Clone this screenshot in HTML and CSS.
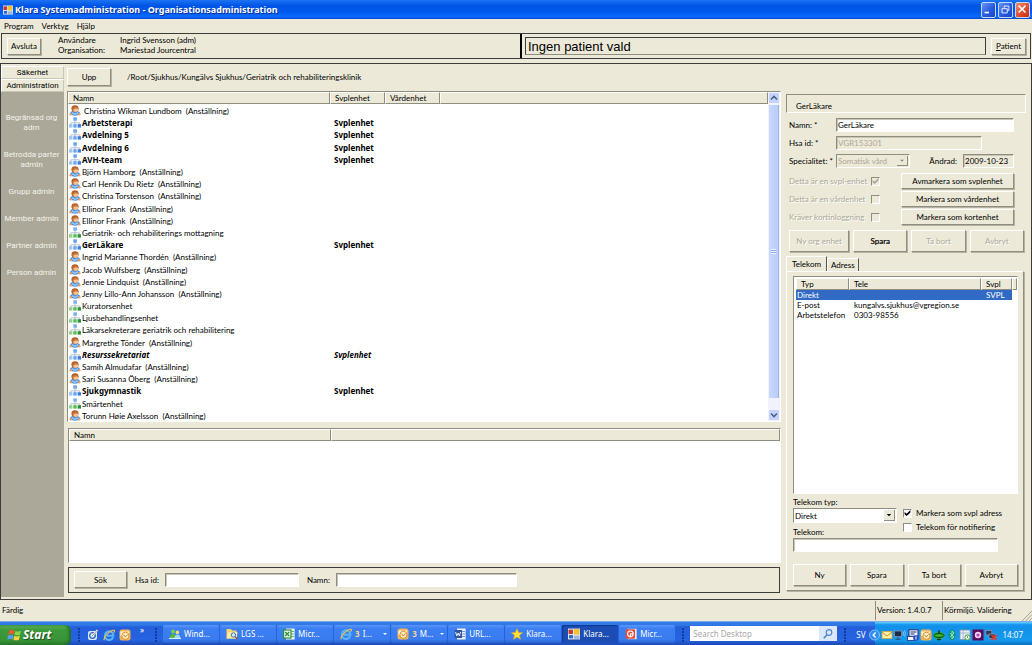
FILE: index.html
```html
<!DOCTYPE html>
<html lang="sv">
<head>
<meta charset="utf-8">
<title>Klara Systemadministration - Organisationsadministration</title>
<link rel="stylesheet" href="styles.css">
</head>
<body>
<svg class="sprite" aria-hidden="true">
  <symbol id="person" viewBox="0 0 12 11">
    <path d="M0.8 9Q1 6.4 3.4 6H8.6Q11 6.400 11.200 9Q9 10.800 6 10.800T0.800 9Z" fill="#4a92e4"/>
    <path d="M3 8.600 6 10 9 8.600V7L6 8.400 3 7Z" fill="#9ccbfa"/>
    <circle cx="1.800" cy="9.200" r="1.300" fill="#e0a070"/><circle cx="10.200" cy="9.200" r="1.300" fill="#e0a070"/>
    <ellipse cx="6" cy="3.600" rx="3.600" ry="3.400" fill="#b5602c"/>
    <ellipse cx="6.700" cy="4.700" rx="2.500" ry="2.200" fill="#f6c294"/>
    <path d="M3 4Q4.500 1 9.200 2.800L8.600 3.800Q6 3 4 5Z" fill="#c9742f"/>
  </symbol>
  <symbol id="org" viewBox="0 0 12 11">
    <path d="M6 3V6M1.8 8V5.8H10.4V8M6 6V8" fill="none" stroke="#a7b4c4" stroke-width="0.8"/>
    <rect x="4.3" y="0.3" width="3.6" height="3.4" fill="#6aa5ee"/>
    <rect x="0" y="7.2" width="3.4" height="3.4" fill="#9cc4f4"/>
    <rect x="4.3" y="7.2" width="3.4" height="3.4" fill="#6aa5ee"/>
    <rect x="8.6" y="7.2" width="3.4" height="3.4" fill="#3f7fd8"/>
  </symbol>
  <symbol id="unit" viewBox="0 0 12 11">
    <path d="M6 3V6M1.8 8V5.8H10.4V8M6 6V8" fill="none" stroke="#a7b4c4" stroke-width="0.8"/>
    <rect x="4.3" y="0.3" width="3.6" height="3.4" fill="#7fb0ee"/>
    <rect x="0" y="7.2" width="3.4" height="3.4" fill="#8fd48c"/>
    <rect x="4.3" y="7.2" width="3.4" height="3.4" fill="#5cbb5a"/>
    <rect x="8.6" y="7.2" width="3.4" height="3.4" fill="#2f8f35"/>
  </symbol>
  <symbol id="form" viewBox="0 0 11 10">
    <rect width="11" height="10" fill="#dfe6f2"/>
    <rect x="0.5" y="1" width="4" height="4" fill="#c8372c"/>
    <rect x="5.5" y="0.5" width="5" height="5" fill="#f2c12e"/>
    <rect x="1" y="6" width="3.5" height="3" fill="#2d62c9"/>
    <rect x="5.5" y="6.5" width="5" height="3" fill="#9fb4d6"/>
  </symbol>
  <symbol id="ie" viewBox="0 0 12 12">
    <path d="M10.2 8.2A4.3 4.3 0 1 1 10.4 5.8V6.7H4" fill="none" stroke="#58b5f7" stroke-width="2"/>
    <path d="M1.4 11.2C-0.6 9 7 1 10.8 1.2 12 1.4 11.4 2.8 10.8 3.6" fill="none" stroke="#f5c63c" stroke-width="1.1"/>
  </symbol>
  <symbol id="outlook" viewBox="0 0 12 12">
    <rect x="0.5" y="0.5" width="11" height="11" rx="2.500" fill="#f3b558"/>
    <path d="M1.500 2.500H10V7H1.500Z" fill="#fff8e6"/>
    <circle cx="6.400" cy="6.800" r="3.600" fill="#fdeec4" stroke="#d98a1e" stroke-width="0.9"/>
    <path d="M4.400 6 6.400 7.800 8.600 5.600" fill="none" stroke="#c06a10"/>
  </symbol>
  <symbol id="desktop" viewBox="0 0 12 12">
    <rect x="1" y="2" width="9" height="9" rx="2" fill="#d8ecfb"/>
    <circle cx="5.5" cy="6.5" r="2.8" fill="none" stroke="#2a6cc0" stroke-width="1.3"/>
    <path d="M5 7 10.5 1" stroke="#fff" stroke-width="1.8"/><path d="M5 7 10 1.6" stroke="#c4552e" stroke-width="0.7"/>
  </symbol>
  <symbol id="people" viewBox="0 0 12 12">
    <circle cx="4" cy="3.6" r="2" fill="#78d046"/><path d="M1 10Q1 6 4 6T7 10Z" fill="#56b82c"/>
    <circle cx="8.4" cy="4.4" r="1.8" fill="#f7dc70"/><path d="M5.6 10.4Q5.6 6.6 8.4 6.6T11.4 10.4Z" fill="#9cd8f8"/>
    <path d="M0 10.4H12" stroke="#e9f6ff"/>
  </symbol>
  <symbol id="folder" viewBox="0 0 12 12">
    <path d="M0.500 1H5L6 2.400H10.500V10.500H0.500Z" fill="#f5d36a"/><path d="M2 4H11.500L10.500 10.600H0.500Z" fill="#ffeaa0"/>
    <circle cx="7.400" cy="7" r="2.200" fill="#cfe8fb" stroke="#3c6cae" stroke-width="0.9"/><path d="M9 8.600 11.4 11" stroke="#80502a" stroke-width="1.2"/>
  </symbol>
  <symbol id="excel" viewBox="0 0 12 12">
    <rect x="3" y="0.500" width="8.600" height="11" fill="#eef8ee"/><path d="M8 3.5H11M8 6H11M8 8.5H11" stroke="#4aa24e" stroke-width="0.8"/>
    <rect x="0.6" y="2" width="7.400" height="8" fill="#eef8ee" stroke="#2f8f3a" stroke-width="1.200"/><path d="M2.2 4 6.200 8M6.200 4 2.2 8" stroke="#2f8f3a" stroke-width="1.4"/>
  </symbol>
  <symbol id="word" viewBox="0 0 12 12">
    <rect x="3" y="0.500" width="8.600" height="11" fill="#eef3fb"/><path d="M8 3.5H11M8 6H11M8 8.5H11" stroke="#5a7ec0" stroke-width="0.8"/>
    <rect x="0.6" y="2" width="7.400" height="8" fill="#2c57a8"/><path d="M1.6 4 2.8 8 4.1 5 5.4 8 6.6 4" fill="none" stroke="#fff" stroke-width="0.9"/>
  </symbol>
  <symbol id="ppt" viewBox="0 0 12 12">
    <rect x="2.6" y="0.8" width="9" height="10.4" fill="#fbe9e2"/>
    <rect x="0.6" y="1.2" width="9.400" height="9.600" rx="1" fill="#e0503c"/><circle cx="5.4" cy="5.8" r="2.8" fill="none" stroke="#fff" stroke-width="1.1"/><path d="M5.4 5.8V9.4M5.4 5.8H8" stroke="#fff"/>
  </symbol>
  <symbol id="star" viewBox="0 0 12 12">
    <path d="M6 0.6 7.6 4.4 11.6 4.7 8.5 7.3 9.5 11.3 6 9.1 2.5 11.3 3.5 7.3 0.4 4.7 4.4 4.4Z" fill="#ffe23d" stroke="#e0a512" stroke-width="0.6"/>
  </symbol>
</svg>

<header class="titlebar">
  <svg class="app-icon"><use href="#form"/></svg>
  <h1>Klara Systemadministration - Organisationsadministration</h1>
  <div class="window-buttons">
    <button class="win" aria-label="Minimera"><svg viewBox="0 0 15 15"><path d="M3 11H8" stroke="#fff" stroke-width="2"/></svg></button>
    <button class="win" aria-label="Återställ"><svg viewBox="0 0 15 15"><path d="M6 5.500V3.500H11.500V8.500H9.500M3.500 6.500H9.500V11.500H3.500Z" fill="none" stroke="#fff"/></svg></button>
    <button class="win close" aria-label="Stäng"><svg viewBox="0 0 15 15"><path d="M3 3 11 11M11 3 3 11" stroke="#fff" stroke-width="1.800"/></svg></button>
  </div>
</header>

<nav class="menubar">
  <button>Program</button><button>Verktyg</button><button>Hjälp</button>
</nav>

<section class="infobar">
  <div class="user-pane">
    <button class="btn">Avsluta</button>
    <dl>
      <dt>Användare</dt><dd>Ingrid Svensson (adm)</dd>
      <dt>Organisation:</dt><dd>Mariestad Jourcentral</dd>
    </dl>
  </div>
  <div class="patient-pane">
    <div class="patient-name">Ingen patient vald</div>
    <button class="btn"><u>P</u>atient</button>
  </div>
</section>

<main class="workspace">
  <aside class="sidebar">
    <button class="side-tab">Säkerhet</button>
    <button class="side-tab">Administration</button>
    <nav class="side-links">
      <a href="#">Begränsad org adm</a>
      <a href="#">Betrodda parter admin</a>
      <a href="#">Grupp admin</a>
      <a href="#">Member admin</a>
      <a href="#">Partner admin</a>
      <a href="#">Person admin</a>
    </nav>
  </aside>

  <section class="browser">
    <div class="pathbar">
      <button class="btn">Upp</button>
      <span>/Root/Sjukhus/Kungälvs Sjukhus/Geriatrik och rehabiliteringsklinik</span>
    </div>
    <div class="list">
      <table class="units">
        <colgroup><col class="c-name"><col class="c-mid"><col class="c-mid"><col></colgroup>
        <thead><tr><th>Namn</th><th>Svplenhet</th><th>Vårdenhet</th><th></th></tr></thead>
        <tbody>
          <tr><td><svg><use href="#person"/></svg>&nbsp;Christina Wikman Lundbom &nbsp;(Anställning)</td><td></td><td></td><td></td></tr>
          <tr class="org"><td><svg><use href="#org"/></svg>Arbetsterapi</td><td>Svplenhet</td><td></td><td></td></tr>
          <tr class="org"><td><svg><use href="#org"/></svg>Avdelning 5</td><td>Svplenhet</td><td></td><td></td></tr>
          <tr class="org"><td><svg><use href="#org"/></svg>Avdelning 6</td><td>Svplenhet</td><td></td><td></td></tr>
          <tr class="org"><td><svg><use href="#org"/></svg>AVH-team</td><td>Svplenhet</td><td></td><td></td></tr>
          <tr><td><svg><use href="#person"/></svg>Björn Hamborg &nbsp;(Anställning)</td><td></td><td></td><td></td></tr>
          <tr><td><svg><use href="#person"/></svg>Carl Henrik Du Rietz &nbsp;(Anställning)</td><td></td><td></td><td></td></tr>
          <tr><td><svg><use href="#person"/></svg>Christina Torstenson &nbsp;(Anställning)</td><td></td><td></td><td></td></tr>
          <tr><td><svg><use href="#person"/></svg>Ellinor Frank &nbsp;(Anställning)</td><td></td><td></td><td></td></tr>
          <tr><td><svg><use href="#person"/></svg>Ellinor Frank &nbsp;(Anställning)</td><td></td><td></td><td></td></tr>
          <tr><td><svg><use href="#unit"/></svg>Geriatrik- och rehabiliterings mottagning</td><td></td><td></td><td></td></tr>
          <tr class="org"><td><svg><use href="#org"/></svg>GerLäkare</td><td>Svplenhet</td><td></td><td></td></tr>
          <tr><td><svg><use href="#person"/></svg>Ingrid Marianne Thordén &nbsp;(Anställning)</td><td></td><td></td><td></td></tr>
          <tr><td><svg><use href="#person"/></svg>Jacob Wulfsberg &nbsp;(Anställning)</td><td></td><td></td><td></td></tr>
          <tr><td><svg><use href="#person"/></svg>Jennie Lindquist &nbsp;(Anställning)</td><td></td><td></td><td></td></tr>
          <tr><td><svg><use href="#person"/></svg>Jenny Lillo-Ann Johansson &nbsp;(Anställning)</td><td></td><td></td><td></td></tr>
          <tr><td><svg><use href="#unit"/></svg>Kuratorsenhet</td><td></td><td></td><td></td></tr>
          <tr><td><svg><use href="#unit"/></svg>Ljusbehandlingsenhet</td><td></td><td></td><td></td></tr>
          <tr><td><svg><use href="#unit"/></svg>Läkarsekreterare geriatrik och rehabilitering</td><td></td><td></td><td></td></tr>
          <tr><td><svg><use href="#person"/></svg>Margrethe Tönder &nbsp;(Anställning)</td><td></td><td></td><td></td></tr>
          <tr class="org italic"><td><svg><use href="#org"/></svg>Resurssekretariat</td><td>Svplenhet</td><td></td><td></td></tr>
          <tr><td><svg><use href="#person"/></svg>Samih Almudafar &nbsp;(Anställning)</td><td></td><td></td><td></td></tr>
          <tr><td><svg><use href="#person"/></svg>Sari Susanna Öberg &nbsp;(Anställning)</td><td></td><td></td><td></td></tr>
          <tr class="org"><td><svg><use href="#org"/></svg>Sjukgymnastik</td><td>Svplenhet</td><td></td><td></td></tr>
          <tr><td><svg><use href="#unit"/></svg>Smärtenhet</td><td></td><td></td><td></td></tr>
          <tr><td><svg><use href="#person"/></svg>Torunn Høie Axelsson &nbsp;(Anställning)</td><td></td><td></td><td></td></tr>
        </tbody>
      </table>
      <div class="scrollbar">
        <button aria-label="Upp"><svg viewBox="0 0 10 10"><path d="M2 6.500 5 3.500 8 6.500" fill="none" stroke="#4d6185" stroke-width="1.600"/></svg></button>
        <div class="thumb"><i></i></div>
        <button aria-label="Ned"><svg viewBox="0 0 10 10"><path d="M2 3.500 5 6.500 8 3.500" fill="none" stroke="#4d6185" stroke-width="1.600"/></svg></button>
      </div>
    </div>
    <div class="list results">
      <table>
        <colgroup><col class="c-name"><col></colgroup>
        <thead><tr><th>Namn</th><th></th></tr></thead>
      </table>
    </div>
    <form class="search">
      <button class="btn" type="button">Sök</button>
      <label for="s-hsa">Hsa id:</label><input class="field s-hsa" id="s-hsa">
      <label for="s-name">Namn:</label><input class="field s-name" id="s-name">
    </form>
  </section>

  <section class="details">
    <h2>GerLäkare</h2>
    <form class="props">
      <div class="row"><label for="namn">Namn: *</label><input class="field grow" id="namn" value="GerLäkare"></div>
      <div class="row"><label for="hsa">Hsa id: *</label><input class="field hsa" id="hsa" value="VGR153301" disabled></div>
      <div class="row last"><label for="spec">Specialitet: *</label>
        <span class="select spec"><select id="spec" disabled><option>Somatisk vård</option></select><svg viewBox="0 0 11 11"><path d="M3 4.500H8L5.500 7Z" fill="#8f8d80"/></svg></span>
        <label class="changed" for="date">Ändrad:</label><input class="field date" id="date" value="2009-10-23" readonly></div>
      <div class="row flag"><label class="off" for="f1">Detta är en svpl-enhet</label><input type="checkbox" id="f1" checked disabled><button class="btn" type="button">Avmarkera som svplenhet</button></div>
      <div class="row flag"><label class="off" for="f2">Detta är en vårdenhet</label><input type="checkbox" id="f2" disabled><button class="btn" type="button">Markera som vårdenhet</button></div>
      <div class="row flag"><label class="off" for="f3">Kräver kortinloggning</label><input type="checkbox" id="f3" disabled><button class="btn" type="button">Markera som kortenhet</button></div>
    </form>
    <div class="actions">
      <button class="btn wide" disabled>Ny org enhet</button><button class="btn strong">Spara</button><button class="btn" disabled>Ta bort</button><button class="btn" disabled>Avbryt</button>
    </div>
    <div class="tabs" role="tablist">
      <button role="tab" aria-selected="true">Telekom</button><button role="tab" aria-selected="false">Adress</button>
    </div>
    <div class="tabpane">
      <div class="list phones">
        <table>
          <colgroup><col class="c-type"><col><col class="c-svpl"><col class="c-end"></colgroup>
          <thead><tr><th>Typ</th><th>Tele</th><th>Svpl</th><th></th></tr></thead>
          <tbody>
            <tr class="selected"><td>Direkt</td><td></td><td>SVPL</td><td></td></tr>
            <tr><td>E-post</td><td>kungalvs.sjukhus@vgregion.se</td><td></td><td></td></tr>
            <tr><td>Arbetstelefon</td><td>0303-98556</td><td></td><td></td></tr>
          </tbody>
        </table>
      </div>
      <form class="phone-form">
        <div class="left">
          <label for="ttype">Telekom typ:</label>
          <span class="select"><select id="ttype"><option>Direkt</option></select><svg viewBox="0 0 11 11"><path d="M3 4.500H8L5.500 7Z" fill="#000"/></svg></span>
        </div>
        <div class="right">
          <label><input type="checkbox" checked>Markera som svpl adress</label>
          <label><input type="checkbox">Telekom för notifiering</label>
        </div>
        <label class="tel-label" for="tel">Telekom:</label>
        <input class="field tel" id="tel">
      </form>
      <div class="actions even">
        <button class="btn">Ny</button><button class="btn">Spara</button><button class="btn">Ta bort</button><button class="btn">Avbryt</button>
      </div>
    </div>
  </section>
</main>

<footer class="statusbar">
  <span class="ready">Färdig</span><span class="cell version">Version: 1.4.0.7</span><span class="cell env">Körmiljö. Validering</span>
  <svg viewBox="0 0 10 10"><path d="M0 10 10 0M3.500 10 10 3.500M7 10 10 7" stroke="#a5a290"/></svg>
</footer>

<nav class="taskbar">
  <button class="start"><svg viewBox="0 0 14 13"><path d="M2 2.500Q4.500 1 7 2.400L6.200 6Q4 4.800 1.300 6Z" fill="#f0582c"/><path d="M7.800 2.700Q10 3.800 13 2.500L12.200 6.200Q9.500 7.300 7 6.300Z" fill="#8cd24a"/><path d="M1.100 7Q3.600 5.800 6 7L5.200 10.600Q3 9.500 0.300 10.800Z" fill="#5b9cf5"/><path d="M6.800 7.300Q9.200 8.400 12 7.200L11.100 10.900Q8.500 12 6 10.900Z" fill="#fbd03c"/></svg>Start</button>
  <i class="grip"></i>
  <div class="quick">
    <button aria-label="Skrivbord"><svg><use href="#desktop"/></svg></button>
    <button aria-label="Internet"><svg><use href="#ie"/></svg></button>
    <button aria-label="E-post"><svg><use href="#outlook"/></svg></button>
    <span>»</span>
  </div>
  <i class="grip"></i>
  <div class="tasks">
    <button><svg><use href="#people"/></svg>Wind...</button>
    <button><svg><use href="#folder"/></svg>LGS ...</button>
    <button><svg><use href="#excel"/></svg>Micr...</button>
    <button class="group"><svg><use href="#ie"/></svg><b>3</b>I...</button>
    <button class="group"><svg><use href="#outlook"/></svg><b>3</b>M...</button>
    <button><svg><use href="#word"/></svg>URL...</button>
    <button><svg><use href="#star"/></svg>Klara...</button>
    <button class="active"><svg><use href="#form"/></svg>Klara...</button>
    <button><svg><use href="#ppt"/></svg>Micr...</button>
  </div>
  <i class="grip"></i>
  <div class="desksearch">
    <input placeholder="Search Desktop" aria-label="Search Desktop">
    <button aria-label="Sök"><svg viewBox="0 0 12 12"><circle cx="7" cy="4.500" r="2.800" fill="none" stroke="#4a86cc" stroke-width="1.200"/><path d="M5 6.800 1.800 10.200" stroke="#4a86cc" stroke-width="1.600"/></svg></button>
  </div>
  <i class="grip"></i>
  <span class="lang">SV</span>
  <div class="tray">
    <button class="expand" aria-label="Visa dolda ikoner"><svg viewBox="0 0 11 11"><circle cx="5.500" cy="5.500" r="5" fill="#2f8df0" stroke="#9ccdfb" stroke-width="0.800"/><path d="M6.600 3 4.200 5.500 6.600 8" fill="none" stroke="#fff" stroke-width="1.400"/></svg></button>
    <svg viewBox="0 0 12 12"><rect x="1" y="2.500" width="10" height="7" fill="#fff0a8" stroke="#d7a43c" stroke-width="0.800"/><path d="M1 3 6 7 11 3" fill="none" stroke="#c58f2a"/></svg>
    <svg viewBox="0 0 12 12"><rect x="0.500" y="2" width="7" height="5.500" fill="#1d2b48" stroke="#8b97b0" stroke-width="0.800"/><path d="M4 7.500V10M1.500 10.400H6.500" stroke="#404c68"/><path d="M9 2.500Q10 4.500 9 6.500M10.600 1.500Q12.200 4.500 10.600 7.500" fill="none" stroke="#a8c6ea" stroke-width="0.900"/></svg>
    <svg viewBox="0 0 12 12"><rect x="2" y="0.800" width="9" height="6.500" fill="#f2f5fa" stroke="#20307a"/><path d="M3.500 3H9.500M3.500 5H7.500" stroke="#20307a"/><rect x="0.500" y="7.500" width="7" height="4" fill="#f2f5fa" stroke="#20307a" stroke-width="0.800"/><circle cx="9" cy="9" r="2.800" fill="#2a47c8"/><path d="M9 7.500V10.500" stroke="#fff"/></svg>
    <svg><use href="#outlook"/></svg>
    <svg viewBox="0 0 12 12"><ellipse cx="6" cy="6.500" rx="5.700" ry="3.600" fill="#39b52e"/><ellipse cx="6" cy="6.500" rx="5" ry="2" fill="none" stroke="#0b3f10"/><path d="M6 1.500V4M4 10.500H8" stroke="#0b3f10" stroke-width="1.600"/></svg>
    <svg viewBox="0 0 12 12"><ellipse cx="6" cy="6" rx="3.600" ry="5.400" fill="#168f8a"/><path d="M4 4 8 8 6 10V2L8 4 4 8" fill="none" stroke="#8cf0b0" stroke-width="0.900"/></svg>
    <svg viewBox="0 0 12 12"><rect x="1" y="1" width="10" height="9.500" fill="#e6eef6" stroke="#7f92b0" stroke-width="0.800"/><path d="M1 4H11M4 1V10" stroke="#9fb0c8" stroke-width="0.800"/><circle cx="8.500" cy="8.500" r="2.600" fill="#fff" stroke="#3d9a3a"/><path d="M8.500 7V9H9.500" fill="none" stroke="#3d9a3a" stroke-width="0.800"/></svg>
    <svg viewBox="0 0 12 12"><rect x="0.500" y="0.500" width="11" height="11" fill="#5a0a5c"/><circle cx="6" cy="6" r="3.200" fill="#e9d6f2"/><circle cx="6" cy="6" r="1.600" fill="#c838b8"/></svg>
    <svg viewBox="0 0 12 12"><rect x="0.800" y="1.500" width="6" height="4.500" fill="#2c3858" stroke="#8b97b0" stroke-width="0.800"/><rect x="4" y="5" width="6" height="4.500" fill="#2c3858" stroke="#8b97b0" stroke-width="0.800"/><path d="M6.500 6 11.500 11M11.500 6 6.500 11" stroke="#f03424" stroke-width="1.700"/></svg>
    <time>14:07</time>
  </div>
</nav>
</body>
</html>
```
FILE: styles.css
```css
* { box-sizing: border-box; }

:root {
  --face: #ece9d8;
  --line: #3c3c38;
  --shadow: #8f8d80;
  --light: #ffffff;
  --off: #aca899;
  --ui: Lato, "Liberation Sans", sans-serif;
  --tahoma: "Noto Sans", "DejaVu Sans", sans-serif;
  --side: Roboto, "Liberation Sans", sans-serif;
}

body {
  margin: 0;
  min-height: 100vh;
  display: flex;
  flex-direction: column;
  background: var(--face);
  font: 8px/12px var(--ui);
  color: #000;
}

.sprite { display: none; }
svg { display: block; flex: none; }
button, input, select { font: inherit; color: inherit; margin: 0; }
button { padding: 0; border: 0; background: none; white-space: nowrap; }
span, label, th, td { white-space: nowrap; }

.btn {
  background: var(--face);
  border: 1px solid;
  border-color: var(--light) var(--shadow) var(--shadow) var(--light);
  box-shadow: 1px 1px 0 #b5b2a2;
}
.btn:disabled { color: var(--off); text-shadow: 1px 1px 0 #fff; }

/* Title bar */
.titlebar {
  display: flex;
  align-items: center;
  height: 19px;
  padding: 0 2px 0 3px;
  gap: 2px;
  background: linear-gradient(#1c74f4, #0055e5 30%, #0058ec 60%, #0a6cff 88%, #0046cc);
}
.app-icon { width: 10px; height: 10px; }
.titlebar h1 {
  flex: 1;
  margin: 0;
  font: bold 9px/12px var(--tahoma);
  color: #fff;
  text-shadow: 1px 1px 0 #0a2f9c;
}
.window-buttons { display: flex; gap: 2px; }
.win {
  width: 15px;
  height: 16px;
  border: 1px solid #c4d6fa;
  border-radius: 2px;
  background: linear-gradient(135deg, #6a94f4, #2456dc 60%, #1c48c0);
}
.win.close { background: linear-gradient(135deg, #f09070, #e0482a 60%, #c43012); }

.menubar { display: flex; gap: 8px; padding: 0 4px; height: 14px; align-items: center; }

/* User and patient strip */
.infobar {
  display: grid;
  grid-template-columns: 518fr 510fr;
  height: 26px;
  margin: 0 1px;
  border: 1px solid var(--line);
}
.user-pane { display: flex; align-items: center; padding-left: 5px; }
.user-pane .btn { width: 34px; height: 17px; }
.user-pane dl {
  display: grid;
  grid-template-columns: 62px auto;
  margin: 0 0 2px 17px;
  line-height: 10px;
}
.user-pane dd { margin: 0; }
.patient-pane {
  display: flex;
  align-items: center;
  gap: 5px;
  padding: 0 4px 0 3px;
  border-left: 2px solid #000;
}
.patient-name {
  flex: 1;
  height: 18px;
  padding-left: 2px;
  border: 1px solid var(--line);
  border-bottom-color: var(--shadow);
  font: 13px/18px "Liberation Sans", Arial, sans-serif;
}
.patient-pane .btn { width: 35px; height: 17px; }

/* Workspace */
.workspace {
  flex: 1;
  display: flex;
  margin-top: 4px;
  padding: 2px 5px 2px 0;
  border: 1px solid var(--line);
}

.sidebar { width: 63px; display: flex; flex-direction: column; margin-right: 3px; }
.side-tab {
  height: 13px;
  border: 1px solid;
  border-color: var(--light) #c9c6b6 #c9c6b6 var(--light);
  font-family: var(--side);
  line-height: 11px;
}
.side-links {
  flex: 1;
  display: flex;
  flex-direction: column;
  gap: 17px;
  padding: 21px 3px 0 1px;
  background: #aca899;
  text-align: center;
  font: 8px/10px var(--side);
}
.side-links a { color: #f4f2ea; text-decoration: none; }

.browser {
  flex: 1;
  display: grid;
  grid-template-rows: 25px minmax(0, 27fr) 6px minmax(0, 11fr) 4px 26px;
  min-width: 0;
  padding-bottom: 4px;
}
.pathbar { display: flex; gap: 16px; align-items: center; padding-bottom: 3px; }
.pathbar .btn { width: 44px; height: 18px; }

.list {
  display: flex;
  min-height: 0;
  background: #fff;
  border: 1px solid;
  border-color: var(--shadow) var(--light) var(--light) var(--shadow);
}
table { border-collapse: separate; border-spacing: 0; table-layout: fixed; width: 100%; }
th, td { padding: 0; text-align: left; font-weight: normal; }
th {
  height: 12px;
  line-height: 10px;
  padding-left: 4px;
  background: var(--face);
  border: 1px solid;
  border-color: var(--light) var(--shadow) var(--shadow) var(--light);
}
.units { flex: 1; height: 100%; }
.c-name { width: 262px; }
.c-mid { width: 55px; }
.units td { line-height: 10px; height: 12px; padding: 2px 0 0 4px; }
.units td:first-child { padding-left: 1px; }
.units svg { display: inline-block; width: 12px; height: 11px; margin: -1px 1px -1px 0; vertical-align: top; }
.org td { font-family: var(--tahoma); font-weight: bold; }
.italic td { font-style: italic; }

.scrollbar {
  display: flex;
  flex-direction: column;
  width: 12px;
  padding: 1px;
  background: #f1f2fb;
}
.scrollbar button { height: 10px; border-radius: 1px; background: #c3d3fb; }
.scrollbar svg { width: 10px; height: 10px; }
.thumb {
  flex: 1;
  display: grid;
  place-items: center;
  margin: 2px 0 12px;
  background: linear-gradient(90deg, #c9d8fd, #b9cbf8);
  border-right: 1px solid #9db4e8;
}
.thumb i { width: 5px; height: 5px; background: repeating-linear-gradient(#eef4fe 0 1px, #8ca8e8 1px 2px); }

.results { grid-row: 4; align-items: flex-start; margin-left: 1px; }
.search {
  grid-row: 6;
  display: flex;
  align-items: center;
  margin: 0 1px 0 1px;
  padding-left: 5px;
  border: 1px solid var(--line);
}
.search .btn { width: 53px; height: 17px; margin-right: 8px; }
.search label { margin-right: 6px; }

.field {
  height: 14px;
  min-width: 0;
  padding: 0 1px;
  border: 1px solid;
  border-color: var(--shadow) var(--light) var(--light) var(--shadow);
  border-radius: 0;
  background: #fff;
  box-shadow: inset 1px 1px 0 #c8c5b5;
}
.field:disabled, .field:read-only { background: var(--face); }
.field:disabled { color: var(--off); }
.s-hsa { width: 134px; margin-right: 8px; }
.s-name { width: 181px; }

/* Details */
.details {
  width: 240px;
  margin: 28px 0 6px 5px;
  display: flex;
  flex-direction: column;
}
.details h2 {
  height: 19px;
  margin: 0 0 5px;
  padding: 5px 0 0 9px;
  border: 1px solid;
  border-color: var(--shadow) var(--light) var(--light) var(--shadow);
  font: inherit;
}
.props { display: flex; flex-direction: column; gap: 4px; padding: 0 12px 0 3px; }
.row { display: flex; align-items: center; height: 14px; }
.row.last { margin-bottom: 2px; }
.row > label:first-child { width: 47px; }
.grow { flex: 1; }
.hsa { width: 146px; }
.date { width: 51px; }
.changed { margin: 0 6px 0 auto; }
.off { color: var(--off); text-shadow: 1px 1px 0 #fff; }
.row.flag > label:first-child { width: 82px; }
.flag .btn { width: 113px; height: 16px; margin-left: auto; }

input[type="checkbox"] {
  appearance: none;
  display: grid;
  place-items: center;
  flex: none;
  width: 9px;
  height: 9px;
  border: 1px solid;
  border-color: var(--shadow) var(--light) var(--light) var(--shadow);
  background: #fff;
}
input[type="checkbox"]:disabled { background: var(--face); }
input[type="checkbox"]:checked::after {
  content: "";
  width: 7px;
  height: 7px;
  background: #000;
  clip-path: polygon(8% 35%, 38% 62%, 92% 8%, 92% 42%, 38% 94%, 8% 68%);
}
input[type="checkbox"]:disabled::after { background: var(--off); }

.select { position: relative; display: flex; height: 15px; }
.select select {
  appearance: none;
  flex: 1;
  min-width: 0;
  padding: 0 14px 0 1px;
  border: 1px solid;
  border-color: var(--shadow) var(--light) var(--light) var(--shadow);
  border-radius: 0;
  background: #fff;
}
.select select:disabled { background: var(--face); color: var(--off); opacity: 1; }
.select svg {
  position: absolute;
  top: 2px;
  right: 2px;
  width: 11px;
  height: 11px;
  background: var(--face);
  border-right: 1px solid var(--shadow);
  border-bottom: 1px solid var(--shadow);
  pointer-events: none;
}
.spec { width: 74px; height: 14px; }
.select.spec svg { height: 10px; }

.actions { display: flex; gap: 4px; margin: 6px 2px 4px 3px; }
.actions .btn { flex: 54; height: 22px; }
.actions .wide { flex: 60; }
.strong { -webkit-text-stroke: 0.2px #000; }

.tabs { display: flex; align-items: flex-end; }
.tabs button {
  height: 13px;
  padding: 0 3px;
  border: 1px solid;
  border-color: var(--light) #55534a transparent var(--light);
  border-bottom: 0;
}
.tabs [aria-selected="true"] { height: 15px; padding: 0 5px 1px; }
.tabpane {
  flex: 1;
  display: flex;
  flex-direction: column;
  margin-right: 2px;
  padding: 4px 5px 4px 6px;
  border: 1px solid;
  border-color: var(--light) var(--shadow) var(--shadow) var(--light);
  box-shadow: 1px 1px 0 #b5b2a2;
}
.phones { flex: 1; align-items: flex-start; padding: 1px 0 0 2px; }
.phones td { height: 10px; line-height: 10px; padding-left: 1px; }
.phones td:nth-child(2), .phones td:nth-child(3) { padding-left: 5px; }
.selected td { background: #316ac5; color: #fff; }
.selected td:last-child { background: none; }
.c-type { width: 53px; }
.c-svpl { width: 31px; }
.c-end { width: 5px; }
.phones th:last-child { padding: 0; }

.phone-form { display: grid; grid-template-columns: 104px 1fr; column-gap: 6px; padding-top: 2px; }
.left { display: flex; flex-direction: column; }
.right {
  grid-row: 1 / 3;
  grid-column: 2;
  display: flex;
  flex-direction: column;
  justify-content: flex-end;
  gap: 2px;
  padding-bottom: 5px;
}
.right label { display: flex; align-items: center; gap: 4px; }
.tel-label { padding-top: 3px; }
.tel { grid-column: 1 / -1; width: 205px; }
.even { margin: 12px 0 0; }

/* Status bar */
.statusbar { display: flex; height: 21px; padding-left: 2px; line-height: 20px; }
.ready { flex: 1; }
.cell { margin: 1px 0 1px 1px; border-left: 1px solid var(--shadow); line-height: 18px; padding-left: 1px; }
.version { width: 66px; }
.env { width: 80px; }
.statusbar svg { width: 10px; height: 10px; align-self: flex-end; }

/* Taskbar */
.taskbar {
  display: flex;
  align-items: stretch;
  height: 24px;
  padding-top: 4px;
  background: linear-gradient(#7fa9ea 0 1px, #2f7ae6 1px 4px, #245edb 6px, #2663e0 80%, #1c49b4);
  color: #fff;
  font: 8px/12px var(--tahoma);
}
.start {
  display: flex;
  align-items: center;
  gap: 1px;
  width: 71px;
  padding-left: 7px;
  border-radius: 0 6px 6px 0;
  background: linear-gradient(#5fb45c, #3c9a3c 25%, #379437 75%, #2a7a2c);
  box-shadow: inset -2px 0 3px #1f6a24;
  font: italic bold 12px/16px var(--tahoma);
  text-shadow: 1px 1px 1px #1d4a1d;
}
.grip {
  width: 4px;
  margin: 3px 4px 2px 7px;
  background: radial-gradient(circle at 1px 1px, #123c9c 1px, transparent 1px) 0 0 / 4px 3px;
}
.quick { display: flex; align-items: center; gap: 4px; padding-left: 1px; }
.taskbar svg { width: 12px; height: 12px; }
.taskbar .start svg { width: 15px; height: 14px; }
.quick span { align-self: flex-start; width: 8px; margin-left: 5px; line-height: 10px; }
.tasks { flex: 1; display: grid; grid-template-columns: repeat(9, minmax(0, 1fr)); gap: 1px; padding-bottom: 2px; }
.tasks button {
  display: flex;
  align-items: center;
  gap: 3px;
  padding-left: 6px;
  border-radius: 2px;
  background: linear-gradient(#5a94f8, #3b7ff2 20%, #3a7cf0 80%, #2c62d4);
  overflow: hidden;
}
.tasks .active { background: #1c4db4; box-shadow: inset 1px 1px 1px #12378c; }
.tasks b { font-weight: bold; color: #f7d58c; }
.group::after {
  content: "";
  margin-left: auto;
  margin-right: 3px;
  border: 2px solid transparent;
  border-top-color: #fff;
  border-bottom: 0;
}
.desksearch { display: flex; width: 147px; margin: 1px 0 4px; background: #fff; }
.desksearch input { flex: 1; min-width: 0; padding: 0 3px; border: 0; background: #fff; color: #000; }
.desksearch input::placeholder { color: #a8a8a8; }
.desksearch button { width: 18px; display: grid; place-items: center; background: #dce8f8; }
.lang { align-self: center; padding: 0 9px 0 2px; margin-left: 2px; }
.tray {
  display: flex;
  align-items: center;
  gap: 1px;
  margin-top: -3px;
  padding: 3px 9px 0 0;
  background: linear-gradient(#5cc6f8 0 1px, #1c9cf0 2px, #1290e9 20%, #149aee 80%, #0c70c0);
}
.expand { margin-left: -6px; }
.tray .expand svg { width: 11px; height: 12px; }
.tray time { margin-left: 5px; }
```
